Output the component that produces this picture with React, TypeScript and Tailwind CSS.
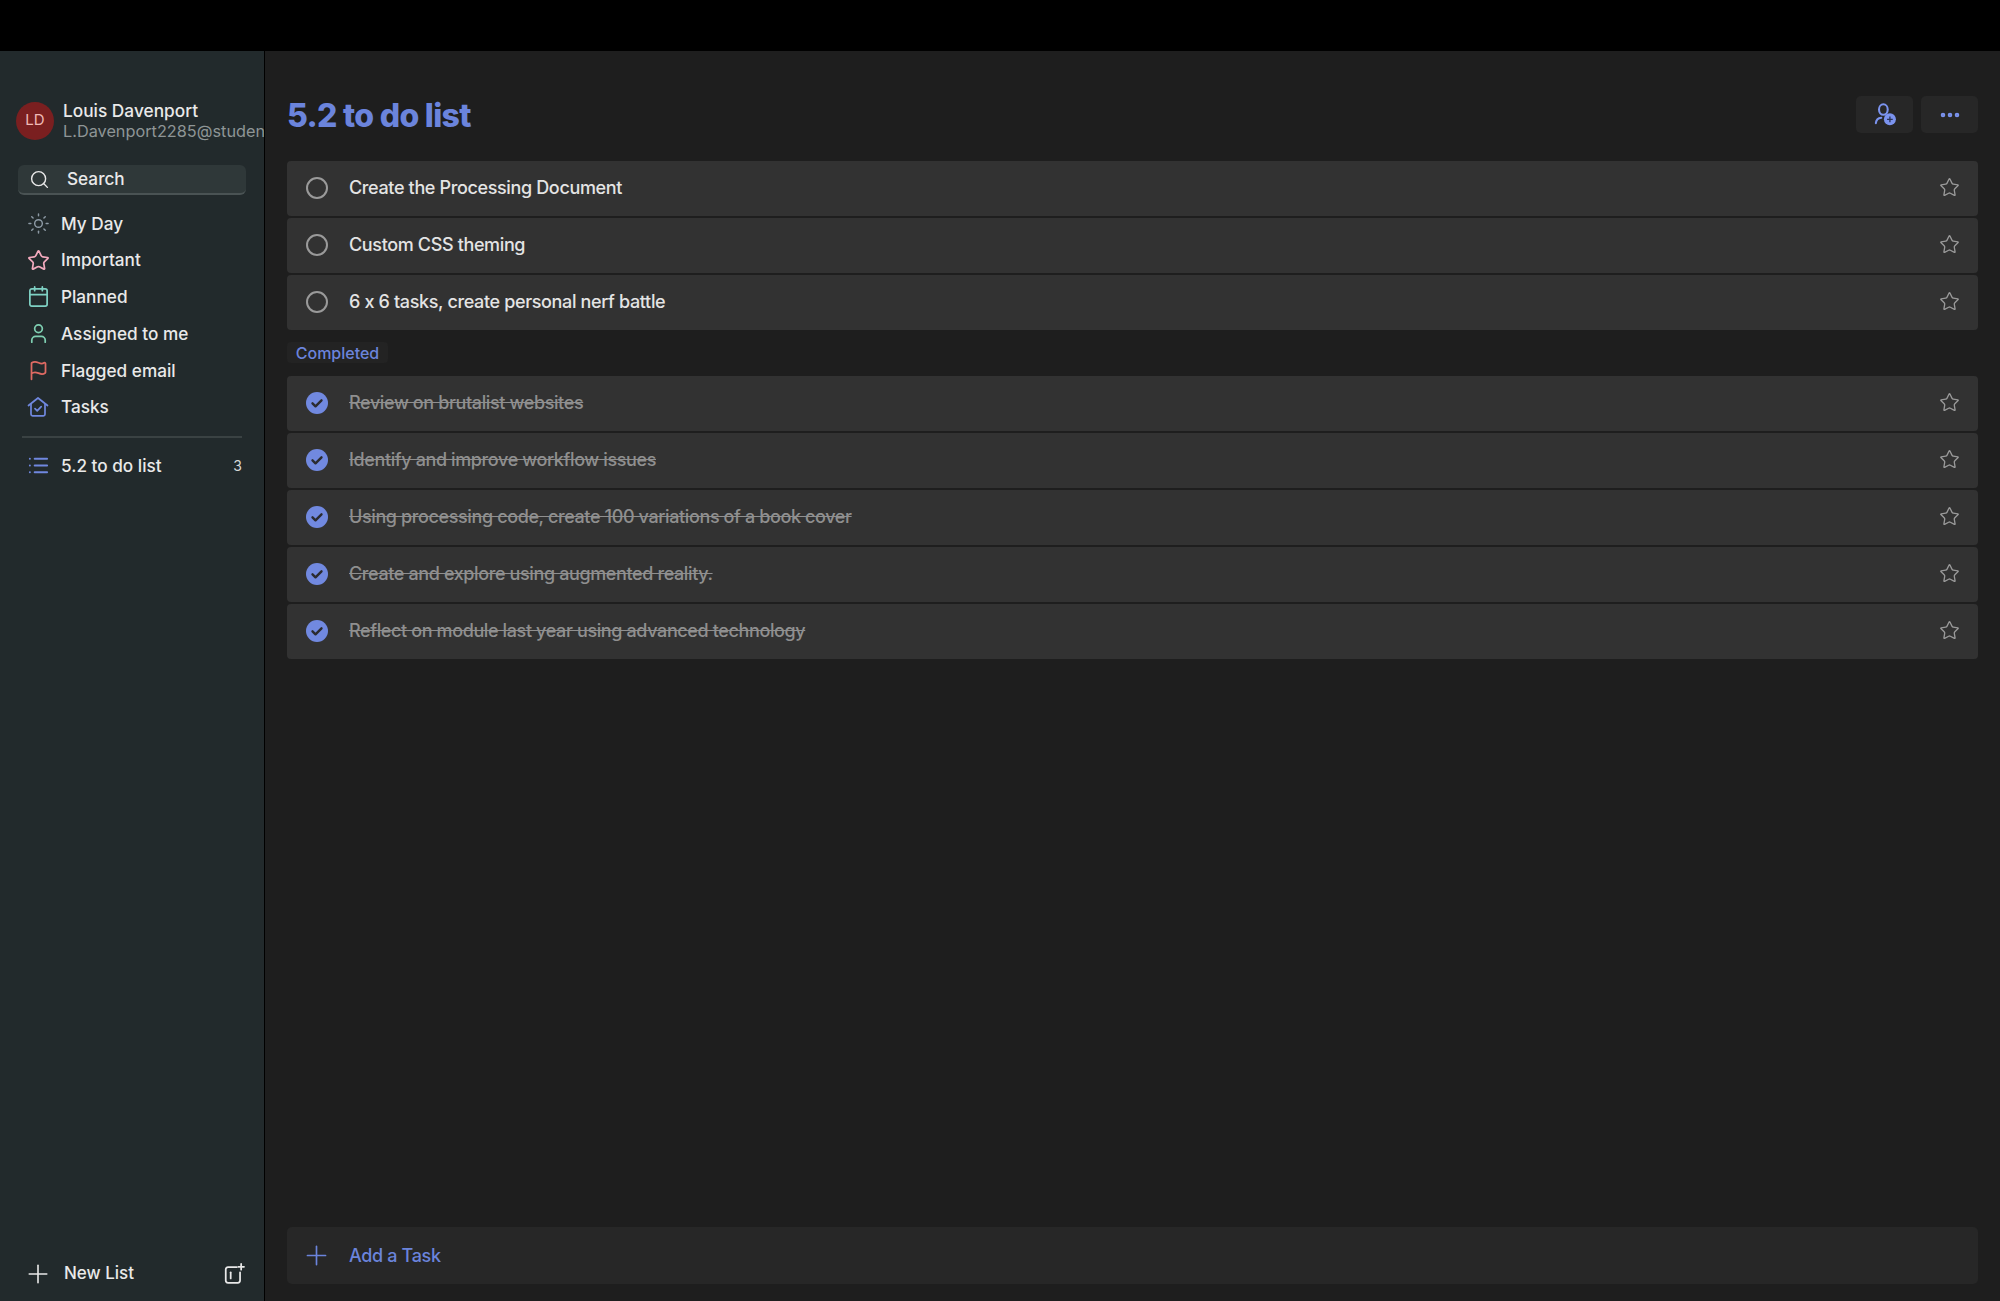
import { Calendar, Ellipsis, Flag, List, Plus, Search, Star, Sun, User } from "lucide-react";

const active = ["Create the Processing Document", "Custom CSS theming", "6 x 6 tasks, create personal nerf battle"];
const done = [
  "Review on brutalist websites",
  "Identify and improve workflow issues",
  "Using processing code, create 100 variations of a book cover",
  "Create and explore using augmented reality.",
  "Reflect on module last year using advanced technology",
];

function HouseCheck() {
  return (
    <svg width="22" height="22" viewBox="0 0 22 22" fill="none" stroke="#7088df" strokeWidth="1.7" strokeLinecap="round" strokeLinejoin="round">
      <path d="M1.5 9.5 11 2l9.5 7.5" />
      <path d="M4 8v10.2c0 .9.7 1.6 1.6 1.6h10.8c.9 0 1.6-.7 1.6-1.6V8" />
      <path d="m8 12.6 2.2 2.2 4-4.2" />
    </svg>
  );
}

function PersonAdd() {
  return (
    <svg width="24" height="24" viewBox="0 0 22 22" fill="none">
      <ellipse cx="9.5" cy="6" rx="4" ry="4.8" stroke="#7b93ee" strokeWidth="1.9" />
      <path d="M2.6 18.500c.3-3 2.200-4.800 5-5" stroke="#7b93ee" strokeWidth="1.9" strokeLinecap="round" />
      <circle cx="15.500" cy="15" r="5.500" fill="#7b93ee" />
      <path d="M15.500 12.400v5.200M12.900 15h5.200" stroke="#2a3355" strokeWidth="1.200" />
    </svg>
  );
}

function NewGroup() {
  return (
    <svg width="22" height="22" viewBox="0 0 20 20" fill="none" stroke="#e8e8e8" strokeWidth="1.6" strokeLinecap="round">
      <path d="M12.500 3.800H4.600C3.200 3.800 2.500 4.600 2.500 6v10c0 1.300.7 2 2.100 2h8.800c1.400 0 2.100-.7 2.100-2V8.500" />
      <path d="M7 8.500v5.500" />
      <path d="M16.500 .9v5.200M13.900 3.500h5.200" />
    </svg>
  );
}

function Checked() {
  return (
    <svg className="-translate-y-px" width="22" height="22" viewBox="0 0 22 22">
      <circle cx="11" cy="11" r="11" fill="#7189e0" />
      <path d="m6.500 11.300 3 3 6-6" fill="none" stroke="#2b2b30" strokeWidth="2.400" strokeLinecap="round" strokeLinejoin="round" />
    </svg>
  );
}

function NavItem({ icon, label }: { icon: React.ReactNode; label: string }) {
  return (
    <div className="flex h-[36.8px] items-center pl-[26px]">
      <span className="flex w-[24px] items-center justify-center">{icon}</span>
      <span className="ml-[11px] text-[17.200px] font-[450] text-[#e9e9e9]">{label}</span>
    </div>
  );
}

function Row({ label, completed }: { label: string; completed?: boolean }) {
  return (
    <div className="flex h-[55px] items-center rounded-[4px] bg-[#323232] pl-[19px] pr-[18px]">
      {completed ? (
        <Checked />
      ) : (
        <span className="h-[22px] w-[22px] -translate-y-px rounded-full border-2 border-[#9a9a9a]" />
      )}
      <span className={completed ? "ml-[21px] -translate-y-px text-[18px] font-[450] tracking-[-0.38px] text-[#8f8f8f] line-through" : "ml-[21px] -translate-y-px text-[18px] font-[450] tracking-[-0.36px] text-[#e4e4e4]"}>{label}</span>
      <Star className="ml-auto -translate-y-px" size={21} color="#9a9a9a" strokeWidth={1.5} />
    </div>
  );
}

export default function App() {
  return (
    <div className="flex h-[1301px] w-[2000px] flex-col overflow-hidden bg-black font-['Inter',sans-serif] [font-feature-settings:'calt'_0]">
      <div className="h-[51px] shrink-0 bg-black" />
      <div className="flex min-h-0 flex-1">
        <aside className="flex w-[265px] shrink-0 flex-col overflow-hidden border-r border-black bg-[#222a2c] pb-[15px]">
          <div className="flex items-center pl-[16px] pt-[49px]">
            <div className="flex h-[38px] w-[38px] shrink-0 items-center justify-center rounded-full bg-[#7a1f20] text-[15px] text-[#f0b9b5]">LD</div>
            <div className="ml-[9px] whitespace-nowrap">
              <div className="text-[17.300px] font-medium leading-[21px] text-[#e9e9e9]">Louis Davenport</div>
              <div className="text-[16.300px] leading-[20px] text-[#8e9596]">L.Davenport2285@student</div>
            </div>
          </div>
          <div className="ml-[18px] mt-[24px] flex h-[30px] w-[228px] items-center rounded-[6px] border-b-2 border-[#4a5354] bg-[#2f3839] pl-[11px]">
            <Search size={21} color="#e9e9e9" strokeWidth={1.6} />
            <span className="ml-[17px] text-[17.200px] font-[450] text-[#e9e9e9]">Search</span>
          </div>
          <div className="mt-[10px]">
            <NavItem icon={<Sun size={23} color="#8d9aa5" strokeWidth={1.5} />} label="My Day" />
            <NavItem icon={<Star size={23} color="#f2a9bd" strokeWidth={1.8} />} label="Important" />
            <NavItem icon={<Calendar size={23} color="#7fd1c4" strokeWidth={1.8} />} label="Planned" />
            <NavItem icon={<User size={23} color="#7fcfb2" strokeWidth={1.8} />} label="Assigned to me" />
            <NavItem icon={<Flag size={21} color="#df6a63" strokeWidth={2} />} label="Flagged email" />
            <NavItem icon={<HouseCheck />} label="Tasks" />
          </div>
          <div className="ml-[22px] mt-[10px] h-[2px] w-[220px] bg-[#3a4243]" />
          <div className="mt-[10px] flex h-[36px] items-center pl-[26px] pr-[22px]">
            <span className="flex w-[24px] items-center justify-center">
              <List size={23} color="#7088df" strokeWidth={2} />
            </span>
            <span className="ml-[11px] text-[17.200px] font-[450] text-[#e9e9e9]">5.2 to do list</span>
            <span className="ml-auto text-[14px] text-[#d8d8d8]">3</span>
          </div>
          <div className="mt-auto flex h-[24px] items-center pl-[23px] pr-[19px]">
            <Plus size={30} color="#e8e8e8" strokeWidth={1.300} />
            <span className="ml-[11px] text-[17px] font-[450] text-[#e9e9e9]">New List</span>
            <span className="ml-auto"><NewGroup /></span>
          </div>
        </aside>
        <main className="flex min-w-0 flex-1 flex-col bg-[#1e1e1e] px-[22px] pb-[17px] pt-[45px]">
          <header className="flex h-[37px] items-center">
            <h1 className="translate-y-px text-[32px] font-extrabold tracking-[-0.7px] text-[#6b84dc]">5.2 to do list</h1>
            <div className="ml-auto flex gap-[8px]">
              <span className="flex h-[37px] w-[57px] items-center justify-center rounded-[5px] bg-[#272727]"><PersonAdd /></span>
              <span className="flex h-[37px] w-[57px] items-center justify-center rounded-[5px] bg-[#272727]"><Ellipsis size={24} color="#7b93ee" strokeWidth={2.600} /></span>
            </div>
          </header>
          <div className="mt-[28px] flex flex-col gap-[2px]">
            {active.map((t) => <Row key={t} label={t} />)}
          </div>
          <div className="mt-[12px] flex h-[21px] w-[101px] items-center justify-center rounded-[4px] bg-[#232323] text-[16px] font-[450] text-[#6b84dc]">Completed</div>
          <div className="mt-[13px] flex flex-col gap-[2px]">
            {done.map((t) => <Row key={t} label={t} completed />)}
          </div>
          <div className="mt-auto flex h-[57px] items-center rounded-[5px] bg-[#272727] pl-[14px]">
            <Plus size={31} color="#6b84dc" strokeWidth={1.300} />
            <span className="ml-[17px] text-[18px] font-[450] tracking-[-0.35px] text-[#6b84dc]">Add a Task</span>
          </div>
        </main>
      </div>
    </div>
  );
}
